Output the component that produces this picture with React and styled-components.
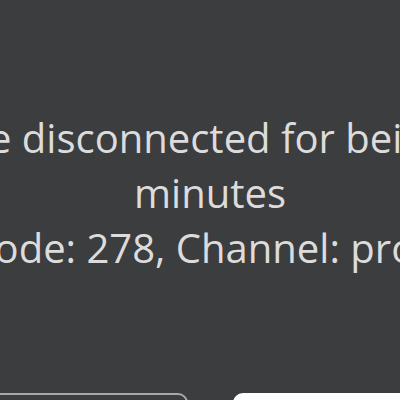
import styled, { createGlobalStyle } from "styled-components";

const GlobalStyle = createGlobalStyle`
  html, body {
    margin: 0;
    padding: 0;
    background: #3c3d3f;
    overflow: hidden;
  }
`;

const Screen = styled.div`
  width: 400px;
  height: 400px;
  overflow: hidden;
  display: flex;
  justify-content: center;
  padding-left: 20px;
  box-sizing: border-box;
`;

const Dialog = styled.div`
  width: 900px;
  flex-shrink: 0;
  display: flex;
  flex-direction: column;
  align-items: center;
  padding-top: 110px;
`;

const Message = styled.p`
  margin: 0;
  font-family: "Open Sans", "Liberation Sans", sans-serif;
  font-size: 40px;
  line-height: 55px;
  color: #dcdcdc;
  text-align: center;
  white-space: nowrap;
`;

const Buttons = styled.div`
  display: flex;
  gap: 45px;
  margin-top: 118px;
`;

const Button = styled.button`
  width: 300px;
  height: 60px;
  border-radius: 10px;
  font-family: "Open Sans", "Liberation Sans", sans-serif;
  font-size: 28px;
  border: 2px solid ${(p) => (p.$primary ? "#ffffff" : "#a8a8a8")};
  background: ${(p) => (p.$primary ? "#ffffff" : "transparent")};
  color: ${(p) => (p.$primary ? "#393b3d" : "#ffffff")};
`;

export default function App() {
  return (
    <>
      <GlobalStyle />
      <Screen>
        <Dialog>
          <Message>You were disconnected for being idle 20</Message>
          <Message>minutes</Message>
          <Message>Error Code: 278, Channel: production</Message>
          <Buttons>
            <Button>Leave</Button>
            <Button $primary>Reconnect</Button>
          </Buttons>
        </Dialog>
      </Screen>
    </>
  );
}
